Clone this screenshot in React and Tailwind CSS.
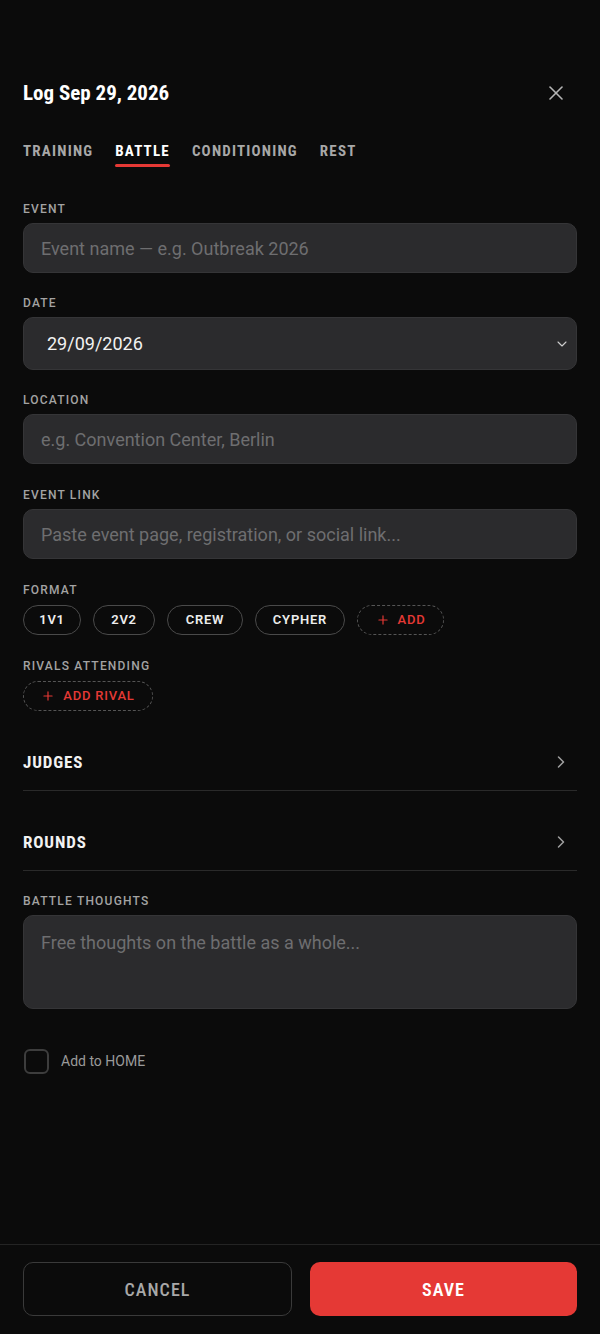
import React from "react";
import { X, ChevronDown, ChevronRight, Plus } from "lucide-react";

const cond = { fontFamily: '"Roboto Condensed", Roboto, sans-serif' };
const body = { fontFamily: 'Roboto, "Noto Sans", sans-serif' };

function Label({ children, mb = "mb-[6px]" }) {
  return (
    <div className={`text-[12px] leading-[16px] font-medium tracking-[0.1em] text-[#a3a3a3] ${mb}`} style={body}>
      {children}
    </div>
  );
}

function Input({ placeholder }) {
  return (
    <div className="h-[50px] rounded-[10px] bg-[#2b2b2d] border border-[#353537] flex items-center px-[17px]">
      <span className="text-[18px] text-[#6e6e70]" style={body}>{placeholder}</span>
    </div>
  );
}

function Chip({ children, w }) {
  return (
    <div className={`h-[30px] ${w} rounded-full border-[1.5px] border-[#4a4a4a] flex items-center justify-center text-[13px] font-semibold tracking-[0.06em] text-[#ededed]`} style={body}>
      {children}
    </div>
  );
}

function DashChip({ children, w }) {
  return (
    <div className={`h-[30px] ${w} rounded-full border border-dashed border-[#555] flex items-center justify-center gap-[8px] text-[13px] font-medium tracking-[0.06em] text-[#e53935]`} style={body}>
      <Plus size={14} strokeWidth={2} />
      <span>{children}</span>
    </div>
  );
}

function Row({ children }) {
  return (
    <div className="mt-[23px] border-b border-[#2a2a2a]">
      <div className="h-[56px] flex items-center justify-between">
        <span className="text-[17px] leading-[20px] font-bold tracking-[0.05em] text-[#f2f2f2]" style={cond}>{children}</span>
        <ChevronRight size={20} strokeWidth={1.8} className="text-[#a0a0a0] mr-[6px]" />
      </div>
    </div>
  );
}

export default function App() {
  return (
    <div className="min-h-screen bg-[#0b0b0b] flex flex-col" style={body}>
      <div className="flex-1 px-[23px]">
        <div className="pt-[79px] flex items-center justify-between">
          <h1 className="text-[21px] leading-[28px] font-bold text-white" style={cond}>Log Sep 29, 2026</h1>
          <X size={24} strokeWidth={1.6} className="text-[#b5b5b5] mr-[9px]" />
        </div>
        <div className="mt-[34px] flex gap-[22px]">
          {["TRAINING", "BATTLE", "CONDITIONING", "REST"].map((t) => (
            <div key={t} className="flex flex-col">
              <span
                className={`text-[15px] leading-[20px] font-bold tracking-[0.08em] ${t === "BATTLE" ? "text-white" : "text-[#a8a8a8]"}`}
                style={cond}
              >
                {t}
              </span>
              <div className={`mt-[3px] h-[3px] rounded-full ${t === "BATTLE" ? "bg-[#e53935]" : "bg-transparent"}`} />
            </div>
          ))}
        </div>

        <div className="mt-[34px]">
          <Label>EVENT</Label>
          <Input placeholder="Event name — e.g. Outbreak 2026" />
        </div>

        <div className="mt-[22px]">
          <Label>DATE</Label>
          <div className="h-[53px] rounded-[10px] bg-[#2b2b2d] border border-[#353537] flex items-center justify-between pl-[23px] pr-[6px]">
            <span className="text-[18px] text-[#f2f2f2]">29/09/2026</span>
            <ChevronDown size={16} strokeWidth={1.6} className="text-[#cfcfcf]" />
          </div>
        </div>

        <div className="mt-[22px]">
          <Label>LOCATION</Label>
          <Input placeholder="e.g. Convention Center, Berlin" />
        </div>

        <div className="mt-[23px]">
          <Label>EVENT LINK</Label>
          <Input placeholder="Paste event page, registration, or social link..." />
        </div>

        <div className="mt-[23px]">
          <Label mb="mb-[7px]">FORMAT</Label>
          <div className="flex gap-[12px]">
            <Chip w="w-[58px]">1V1</Chip>
            <Chip w="w-[62px]">2V2</Chip>
            <Chip w="w-[76px]">CREW</Chip>
            <Chip w="w-[90px]">CYPHER</Chip>
            <DashChip w="w-[87px]">ADD</DashChip>
          </div>
        </div>

        <div className="mt-[23px]">
          <Label mb="mb-[7px]">RIVALS ATTENDING</Label>
          <div className="flex">
            <DashChip w="w-[130px]">ADD RIVAL</DashChip>
          </div>
        </div>

        <Row>JUDGES</Row>
        <Row>ROUNDS</Row>

        <div className="mt-[22px]">
          <Label>BATTLE THOUGHTS</Label>
          <div className="h-[94px] rounded-[10px] bg-[#2b2b2d] border border-[#353537] px-[17px] pt-[13px]">
            <span className="text-[18px] text-[#6e6e70]">Free thoughts on the battle as a whole...</span>
          </div>
        </div>

        <div className="mt-[40px] flex items-center gap-[12px]">
          <div className="w-[25px] h-[25px] rounded-[6px] border-2 border-[#3d3d3d] ml-[1px]" />
          <span className="text-[14px] text-[#9a9a9a]">Add to HOME</span>
        </div>
      </div>

      <div className="border-t border-[#242424] px-[23px] pt-[17px] pb-[18px] flex gap-[18px]">
        <div className="flex-1 h-[54px] rounded-[10px] border border-[#3a3a3a] flex items-center justify-center">
          <span className="text-[18px] font-medium tracking-[0.06em] text-[#a8a8a8]" style={cond}>CANCEL</span>
        </div>
        <div className="flex-1 h-[54px] rounded-[10px] bg-[#e53935] flex items-center justify-center">
          <span className="text-[18px] font-semibold tracking-[0.06em] text-white" style={cond}>SAVE</span>
        </div>
      </div>
    </div>
  );
}
